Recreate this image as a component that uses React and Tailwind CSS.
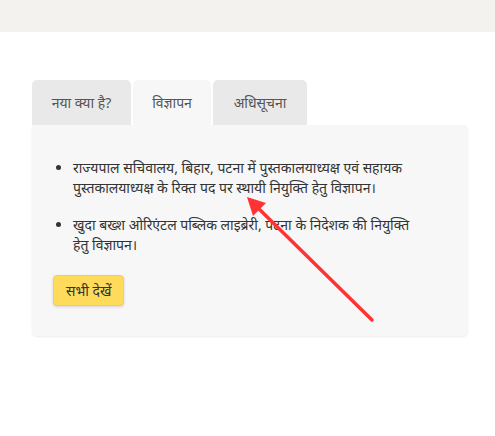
import { useState } from "react";

const tabs = [
  { label: "नया क्या है?", width: "w-[99px]" },
  { label: "विज्ञापन", width: "w-[78px]" },
  { label: "अधिसूचना", width: "w-[94px]" },
];

export default function App() {
  const [active, setActive] = useState(1);

  return (
    <div
      className="relative min-h-screen bg-white text-[#333]"
      style={{ fontFamily: '"Noto Sans", "Lato", sans-serif' }}
    >
      <div className="h-[32px] bg-[#f4f2ee]" />

      <div className="ml-[32px] mt-[48px] w-[436px]">
        <div className="flex gap-[2px]">
          {tabs.map((tab, index) => (
            <button
              key={index}
              onClick={() => setActive(index)}
              className={
                tab.width +
                (index === active
                  ? " h-[45px] rounded-t-[5px] bg-[#f7f7f7] text-[14px] text-[#555]"
                  : " h-[45px] rounded-t-[5px] bg-[#e9e9e9] text-[14px] text-[#555]")
              }
            >
              {tab.label}
            </button>
          ))}
        </div>

        <div className="rounded-b-[5px] rounded-tr-[5px] bg-[#f7f7f7] px-[21px] pt-[33px] pb-[30px] shadow-[0_1px_2px_rgba(0,0,0,0.08)]">
          <ul className="list-disc pl-[20px] text-[14px] leading-[20px] text-[#333]">
            <li className="mb-[17px]">
              राज्यपाल सचिवालय, बिहार, पटना में पुस्तकालयाध्यक्ष एवं सहायक
              <br />
              पुस्तकालयाध्यक्ष के रिक्त पद पर स्थायी नियुक्ति हेतु विज्ञापन।
            </li>
            <li>
              खुदा बख्श ओरिएंटल पब्लिक लाइब्रेरी, पटना के निदेशक की नियुक्ति
              <br />
              हेतु विज्ञापन।
            </li>
          </ul>

          <button className="mt-[20px] h-[31px] rounded-[4px] border border-[#f0d060] bg-[#ffdb5c] px-[12px] text-[14px] text-[#333] shadow-[0_1px_3px_rgba(0,0,0,0.15)]">
            सभी देखें
          </button>
        </div>
      </div>

      <svg
        className="pointer-events-none absolute left-0 top-0"
        width="495"
        height="436"
      >
        <line x1="372" y1="320" x2="256" y2="206" stroke="#ff3333" strokeWidth="3.5" strokeLinecap="round" />
        <polygon points="247,197 266,203 253,216" fill="#ff3333" />
      </svg>
    </div>
  );
}
